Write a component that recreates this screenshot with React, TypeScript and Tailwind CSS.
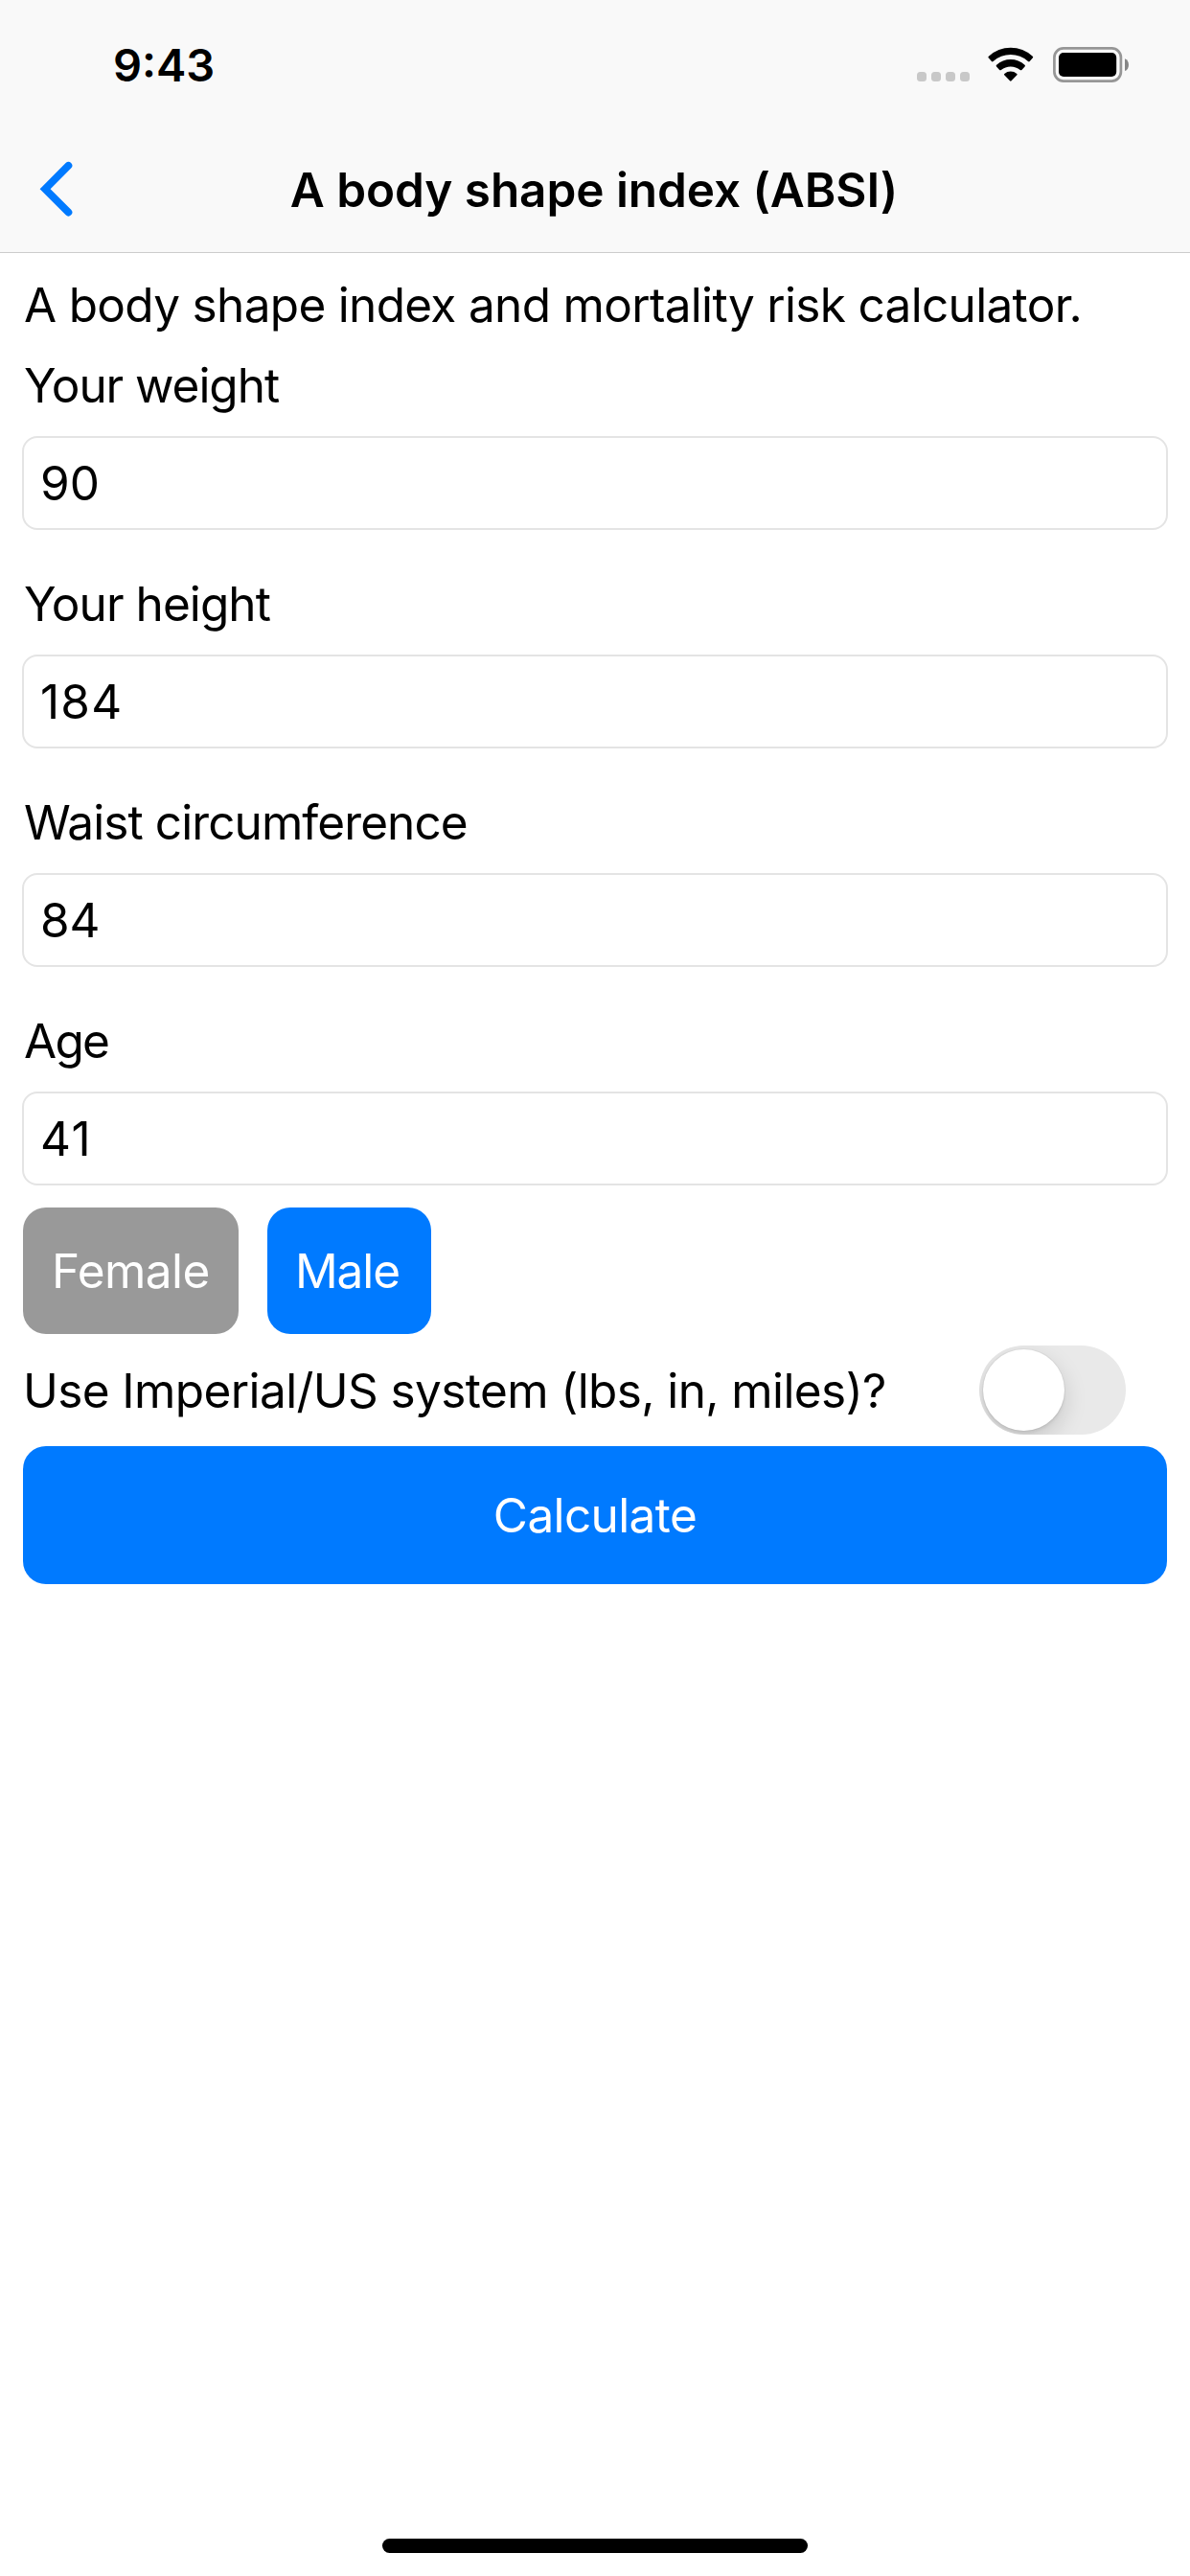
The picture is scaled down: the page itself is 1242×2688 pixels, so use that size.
import React, { useState } from "react";

function StatusBar() {
  return (
    <div className="flex h-[132px] items-start justify-between pl-[118px] pr-[63px]">
      <div className="mt-[39px] text-[47px] leading-[58px] font-semibold">9:43</div>
      <div className="mt-[49px] flex items-start">
        <div className="mt-[26px] mr-[19px] flex gap-[5px]">
          {[0, 1, 2, 3].map((i) => (
            <span key={i} className="size-[10px] rounded-[3.5px] bg-[#c8c8c8]" />
          ))}
        </div>
        <svg className="mr-[20px] h-[37px] w-[48px]" viewBox="0 0 48 37">
          <path d="M0.900 11.600Q-0.100 10.700 0.900 9.800A33.500 33.500 0 0 1 46.700 9.800Q47.700 10.700 46.700 11.600L43.700 15Q42.900 15.800 42 15A27.300 27.300 0 0 0 5.600 15Q4.700 15.800 3.900 15Z" />
          <path d="M9 20.400Q8.200 19.500 9.100 18.700A21.800 21.800 0 0 1 38.500 18.700Q39.400 19.500 38.600 20.400L35.400 24Q34.600 24.700 33.700 24A15.500 15.500 0 0 0 13.900 24Q13 24.700 12.200 24Z" />
          <path d="M17.200 29.300Q16.500 28.600 17.300 27.900A10.300 10.300 0 0 1 30.300 27.900Q31.100 28.600 30.400 29.300L24.600 35.300Q23.800 36 23 35.300Z" />
        </svg>
        <svg className="h-[37px] w-[80px]" viewBox="0 0 80 37">
          <rect x="1.400" y="1.400" width="69.500" height="34.200" rx="9.500" fill="none" stroke="#969696" strokeWidth="2.700" />
          <rect x="6" y="6" width="60.200" height="25" rx="5" />
          <path d="M75 12.300C80.300 14 80.300 23.300 75 25Z" fill="#868686" />
        </svg>
      </div>
    </div>
  );
}

function NavBar() {
  return (
    <div className="flex h-[130px] items-center">
      <button className="flex w-[120px] pl-[40px]" aria-label="Back">
        <svg className="h-[60px] w-[38px]" viewBox="0 0 38 60" fill="none">
          <path d="M31.400 5.800L7.100 30.200L31.400 54.600" stroke="#007aff" strokeWidth="7.800" strokeLinecap="round" />
        </svg>
      </button>
      <h1 className="mt-[2px] flex-1 pr-[122px] text-center text-[49.5px] leading-[60px] font-semibold tracking-[-0.07px] whitespace-nowrap">
        A body shape index (ABSI)
      </h1>
    </div>
  );
}

type FieldProps = { label: string; value: string; labelClass: string; valueClass?: string };

function Field({ label, value, labelClass, valueClass = "" }: FieldProps) {
  return (
    <div className="mb-[47px]">
      <div className={`h-[83px] pl-px leading-[60px] ${labelClass}`}>{label}</div>
      <div className="-mx-px flex h-[98px] items-center rounded-[16px] border-2 border-[#e4e4e4] pl-[17px]">
        <span className={`leading-[60px] ${valueClass}`}>{value}</span>
      </div>
    </div>
  );
}

export default function App() {
  const [sex, setSex] = useState("male");
  const [imperial, setImperial] = useState(false);

  return (
    <div className="flex h-[2688px] w-[1242px] flex-col bg-white font-['Inter',sans-serif] text-[49.5px] text-black">
      <header className="h-[264px] border-b border-[#cccccc] bg-[#f9f9f9]">
        <StatusBar />
        <NavBar />
      </header>
      <main className="flex-1 px-[24px] pt-[24px]">
        <p className="h-[84px] pl-px leading-[60px] tracking-[-0.68px] whitespace-nowrap">
          A body shape index and mortality risk calculator.
        </p>
        <Field label="Your weight" value="90" labelClass="tracking-[-1.05px]" />
        <Field label="Your height" value="184" labelClass="tracking-[-0.94px]" valueClass="tracking-[1.2px]" />
        <Field label="Waist circumference" value="84" labelClass="tracking-[-0.91px]" />
        <Field label="Age" value="41" labelClass="tracking-[-1.7px]" valueClass="tracking-[1.5px]" />
        <div className="-mt-[24px] flex gap-[30px] leading-[60px] text-white">
          <button
            onClick={() => setSex("female")}
            className={`h-[132px] w-[225px] rounded-[24px] pl-[30px] text-left tracking-[-0.56px] ${sex === "female" ? "bg-[#007aff]" : "bg-[#999999]"}`}
          >
            Female
          </button>
          <button
            onClick={() => setSex("male")}
            className={`h-[132px] w-[171px] rounded-[24px] pl-[29px] text-left tracking-[-1.1px] ${sex === "male" ? "bg-[#007aff]" : "bg-[#999999]"}`}
          >
            Male
          </button>
        </div>
        <div className="flex h-[117px] items-center justify-between pr-[43px]">
          <span className="leading-[60px] tracking-[-0.6px] whitespace-nowrap">Use Imperial/US system (lbs, in, miles)?</span>
          <button
            role="switch"
            aria-checked={imperial}
            aria-label="Use Imperial/US system"
            onClick={() => setImperial(!imperial)}
            className={`flex h-[93px] w-[153px] items-center overflow-hidden rounded-full px-[4px] ${imperial ? "justify-end bg-[#34c759]" : "bg-[#e9e9e9]"}`}
          >
            <span className="size-[85px] rounded-full bg-white shadow-[0_0_0_1px_rgba(0,0,0,0.04),0_9px_24px_rgba(0,0,0,0.15),0_3px_3px_rgba(0,0,0,0.06)]" />
          </button>
        </div>
        <button className="flex h-[144px] w-full items-center justify-center rounded-[24px] bg-[#007aff] leading-[60px] tracking-[-0.62px] text-white">
          Calculate
        </button>
      </main>
      <div className="mx-auto mb-[24px] h-[15px] w-[444px] rounded-full bg-black" />
    </div>
  );
}
